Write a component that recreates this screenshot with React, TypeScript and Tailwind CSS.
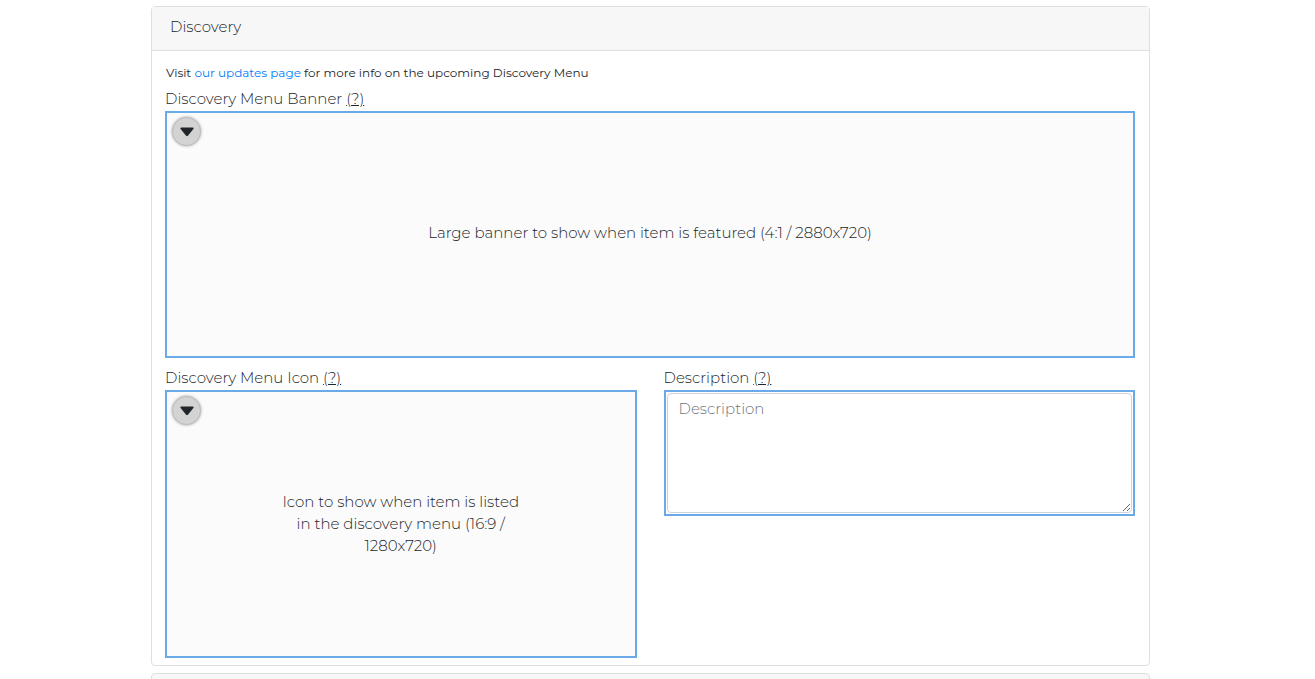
import { useId } from "react";
import type { ReactNode } from "react";

function Hint({ text }: { text: string }) {
  return (
    <abbr title={text} className="underline decoration-solid">
      (?)
    </abbr>
  );
}

function DropArea({ id, className, children }: { id: string; className: string; children: ReactNode }) {
  return (
    <div
      id={id}
      className={`relative flex w-full items-center justify-center border-2 border-[#6aaae8] bg-[#fbfbfb] text-center ${className}`}
    >
      <button
        type="button"
        aria-label="Image options"
        className="absolute left-[5px] top-1 flex size-[29px] items-center justify-center rounded-full border border-[#bdbdbd] bg-[#d3d3d3] shadow-[0_0_3px_rgba(0,0,0,0.35)]"
      >
        <svg width="14" height="10" viewBox="0 0 14 10" className="fill-[#212529]" aria-hidden="true">
          <path d="M1.2 0.5h11.6c.8 0 1.1.9.6 1.5L7.9 8.7c-.5.6-1.3.6-1.8 0L.6 2C.1 1.4.4.5 1.2.5z" />
        </svg>
      </button>
      {children}
    </div>
  );
}

export default function App() {
  const descId = useId();

  return (
    <div className="h-screen overflow-hidden bg-white pr-3.5 pt-1.5 font-[Montserrat,Inter,sans-serif] text-[15px] leading-[22px] font-light text-[#212529]">
      <div className="mx-auto flex max-w-[999px] flex-col gap-[7px]">
        <section className="rounded border border-[#dfdfdf]">
          <h2 className="border-b border-[#dfdfdf] bg-[#f7f7f7] px-[18px] pb-[12px] pt-[9px]">Discovery</h2>
          <div className="pb-[7px] pl-[13px] pr-[14px] pt-[11px]">
            <p className="pl-px text-[12px] font-normal">
              Visit{" "}
              <a href="#updates" className="text-[#007bff]">
                our updates page
              </a>{" "}
              for more info on the upcoming Discovery Menu
            </p>
            <div className="pt-1">
              <h3 className="pb-px">
                Discovery Menu Banner <Hint text="Shown when the item is featured" />
              </h3>
              <DropArea id="banner" className="aspect-[970/247] pb-1">
                <p>Large banner to show when item is featured (4:1 / 2880x720)</p>
              </DropArea>
            </div>
            <div className="grid grid-cols-2 items-start gap-[27px] pt-[9px]">
              <div>
                <h3 className="pb-px">
                  Discovery Menu Icon <Hint text="Shown when the item is listed" />
                </h3>
                <DropArea id="icon" className="aspect-[471/268]">
                  <p className="w-[52%]">Icon to show when item is listed in the discovery menu (16:9 / 1280x720)</p>
                </DropArea>
              </div>
              <div>
                <label htmlFor={descId} className="block pb-px">
                  Description <Hint text="Shown in the discovery menu" />
                </label>
                <div className="border-2 border-[#6aaae8] p-px">
                  <textarea
                    id={descId}
                    placeholder="Description"
                    className="block h-[120px] w-full resize rounded border border-[#ced4da] bg-white px-[11px] py-1 placeholder:text-[#6c757d]"
                  />
                </div>
              </div>
            </div>
          </div>
        </section>
        <section className="h-11 rounded border border-[#dfdfdf] bg-[#f7f7f7]" />
      </div>
    </div>
  );
}
